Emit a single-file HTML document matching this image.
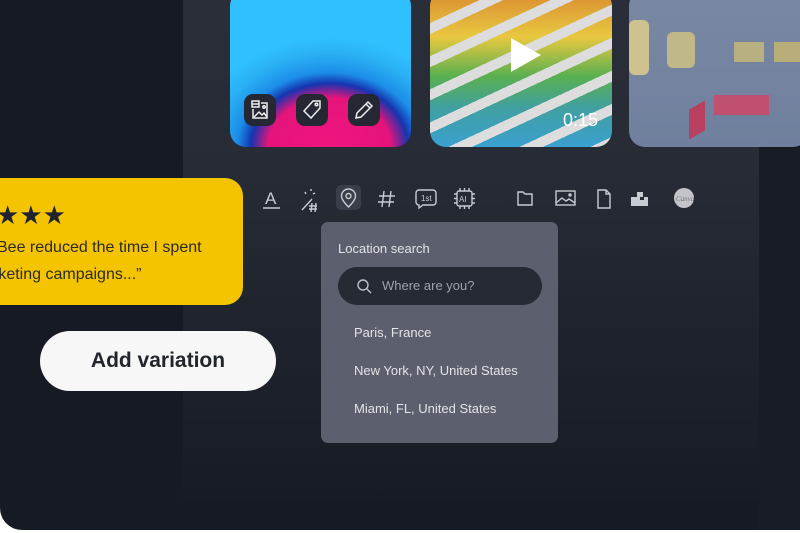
<!DOCTYPE html>
<html><head><style>
*{margin:0;padding:0;box-sizing:border-box}
body{width:800px;height:533px;background:#fff;position:relative;overflow:hidden;font-family:"Liberation Sans",sans-serif}
.outer{position:absolute;left:0;top:0;width:800px;height:530px;background:#161a23;border-bottom-left-radius:22px}
.panel{position:absolute;left:183px;top:0;width:576px;height:500px;background:linear-gradient(#2a2e38 0%,#272b35 35%,#1f232c 65%,#171b24 100%)}
.right{position:absolute;left:759px;top:148px;width:41px;height:382px;background:#181c25}
.img{position:absolute;top:-10px;height:157px;border-radius:16px;overflow:hidden}
.i1{left:230px;width:181px;background:radial-gradient(ellipse 75% 70% at 55% 100%,#f0157e 0%,#e5147a 45%,#1535b0 58%,#1c8ee8 68%,#2ab0f5 85%,#30c0ff 100%)}
.i2{left:430px;width:182px;background:repeating-linear-gradient(155deg,#ddd 0 10px,transparent 10px 30px),linear-gradient(180deg,#d98a30 0%,#e8c840 30%,#5ab050 55%,#40a0a0 75%,#3aa0d0 100%)}
.i3{left:629px;width:180px;background:linear-gradient(180deg,#7a88a3,#6f809e);}
.chip{position:absolute;top:104px;width:32px;height:32px;border-radius:9px;background:#252833}
.yellow{position:absolute;left:-20px;top:178px;width:263px;height:127px;background:#f5c400;border-radius:18px}
.btn{position:absolute;left:40px;top:331px;width:236px;height:60px;background:#f7f7f7;border-radius:30px;font-weight:bold;font-size:21px;color:#23252c;text-align:center;line-height:60px}
.dd{position:absolute;left:321px;top:222px;width:237px;height:221px;background:#5c5f6d;border-radius:7px;color:#e3e4e9;font-size:13px}
.sf{position:absolute;left:17px;top:45px;width:204px;height:38px;background:#262a35;border-radius:19px}
</style></head><body>
<div class="outer"></div>
<div class="panel"></div>
<div class="right"></div>
<div class="img i1">
 <div class="chip" style="left:14px"><svg width="32" height="32" viewBox="0 0 32 32" fill="none" stroke="#eee" stroke-width="1.5"><rect x="8" y="7" width="7" height="6"/><path d="M8 10h7"/><path d="M17 9h6v15H9v-9"/><path d="M10 23l5-5 3 3 2-2 3 4"/><circle cx="20" cy="13" r="1.2"/></svg></div>
 <div class="chip" style="left:66px"><svg width="32" height="32" viewBox="0 0 32 32" fill="none" stroke="#eee" stroke-width="1.5"><path d="M17 7h7v7l-9 10-7-7z"/><circle cx="20.5" cy="10.5" r="1.3"/></svg></div>
 <div class="chip" style="left:118px"><svg width="32" height="32" viewBox="0 0 32 32" fill="none" stroke="#eee" stroke-width="1.5"><path d="M20 8l4 4-11 11-5 1 1-5z"/><path d="M18 10l4 4"/></svg></div>
</div>
<div class="img i2">
 <svg style="position:absolute;left:78px;top:45px" width="36" height="40" viewBox="0 0 36 40"><path d="M3 3l30 17-30 17z" fill="#fff"/></svg>
 <div style="position:absolute;right:14px;top:120px;color:#fff;font-size:18px">0:15</div>
</div>
<div class="img i3">
 <div style="position:absolute;left:0;top:30px;width:20px;height:55px;background:#cfc290;border-radius:6px"></div>
 <div style="position:absolute;left:38px;top:42px;width:28px;height:36px;background:#c0b888;border-radius:6px"></div>
 <div style="position:absolute;left:105px;top:52px;width:30px;height:20px;background:#b8b080"></div>
 <div style="position:absolute;left:145px;top:52px;width:40px;height:20px;background:#b8ad78"></div>
 <div style="position:absolute;left:85px;top:105px;width:55px;height:20px;background:#c05070"></div>
 <div style="position:absolute;left:60px;top:115px;width:16px;height:30px;background:#b84060;transform:skewY(-30deg)"></div>
</div>

<div class="yellow">
 <div style="position:absolute;left:16px;top:22px;font-size:26px;color:#1f2330;letter-spacing:0px">★★★</div>
 <div style="position:absolute;left:17px;top:56px;font-size:16px;color:#2a2a2a;line-height:27px;white-space:nowrap">Bee reduced the time I spent<br><span style="margin-left:-4px">rketing campaigns...”</span></div>
</div>
<div class="btn">Add variation</div>

<svg style="position:absolute;left:255px;top:184px" width="450" height="30" viewBox="0 0 450 30" fill="none" stroke="#c9cbd2" stroke-width="1.4">
 <text x="10" y="20" fill="#c9cbd2" stroke="none" font-size="17" font-family="Liberation Sans">A</text><path d="M8 24h17"/>
 <path d="M47 26l10-11M50 8l1 2M56 5v2M60 9l-2 1M54 22h8M54 25h8M57 19l-1 9M61 19l-1 9"/>
 <rect x="81" y="1" width="25" height="25" rx="5" fill="#3a3e4a" stroke="none"/>
 <path d="M93.5 23c-5-5-7-8-7-11a7 7 0 0114 0c0 3-2 6-7 11z"/><circle cx="93.5" cy="12" r="2.5"/>
 <path d="M129 7l-2 16M136 7l-2 16M124 12h16M123 18h16"/>
 <path d="M164 6h14a3 3 0 013 3v9a3 3 0 01-3 3h-10l-4 3v-3a3 3 0 01-3-3V9a3 3 0 013-3z"/><text x="166" y="17" fill="#c9cbd2" stroke="none" font-size="8" font-family="Liberation Sans">1st</text>
 <rect x="202" y="7" width="15" height="15" rx="2"/><path d="M205 4v3M209.5 4v3M214 4v3M205 22v3M209.5 22v3M214 22v3M199 10h3M199 14.5h3M199 19h3M217 10h3M217 14.5h3M217 19h3"/><text x="204" y="18" fill="#c9cbd2" stroke="none" font-size="8" font-family="Liberation Sans">AI</text>
 <path d="M263 8h5l2 2h7v11h-14z"/>
 <rect x="301" y="7" width="19" height="14"/><path d="M301 19l6-5 4 3 3-2 6 4"/><circle cx="315" cy="11" r="1"/>
 <path d="M343 6h8l4 4v14h-12z M351 6v4h4"/>
 <path d="M382 8h6v5h5v9h-17v-9h6z" fill="#c9cbd2" stroke="none"/><rect x="385" y="13" width="4" height="3" fill="#272b35" stroke="none"/>
 <circle cx="429" cy="14" r="10" fill="#c4c5ca" stroke="none"/><text x="421" y="17" fill="#777" stroke="none" font-size="7" font-style="italic" font-family="Liberation Serif">Canva</text>
</svg>

<div class="dd">
 <div style="position:absolute;left:17px;top:19px">Location search</div>
 <div class="sf">
  <svg style="position:absolute;left:19px;top:12px" width="15" height="15" viewBox="0 0 15 15" fill="none" stroke="#bfc1c8" stroke-width="1.4"><circle cx="6" cy="6" r="5"/><path d="M10 10l4 4"/></svg>
  <div style="position:absolute;left:44px;top:11px;color:#9ea1aa">Where are you?</div>
 </div>
 <div style="position:absolute;left:33px;top:103px">Paris, France</div>
 <div style="position:absolute;left:33px;top:141px">New York, NY, United States</div>
 <div style="position:absolute;left:33px;top:179px">Miami, FL, United States</div>
</div>
</body></html>
